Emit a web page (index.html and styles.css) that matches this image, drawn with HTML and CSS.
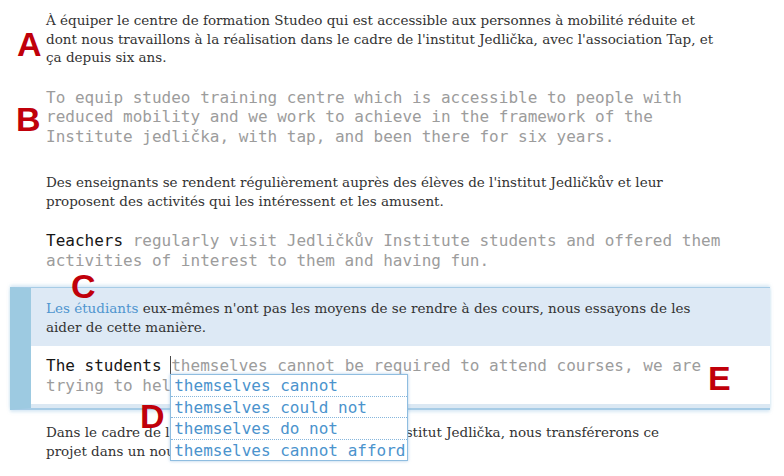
FILE: index.html
```html
<!DOCTYPE html>
<html lang="fr">
<head>
<meta charset="utf-8">
<title>Studeo</title>
<link rel="stylesheet" href="styles.css">
</head>
<body>
<div class="page">
  <div class="seg">
    <p class="src">À équiper le centre de formation Studeo qui est accessible aux personnes à mobilité réduite et<br>dont nous travaillons à la réalisation dans le cadre de l'institut Jedlička, avec l'association Tap, et<br>ça depuis six ans.</p>
    <p class="tgt">To equip studeo training centre which is accessible to people with<br>reduced mobility and we work to achieve in the framework of the<br>Institute jedlička, with tap, and been there for six years.</p>
  </div>
  <div class="seg">
    <p class="src">Des enseignants se rendent régulièrement auprès des élèves de l'institut Jedličkův et leur<br>proposent des activités qui les intéressent et les amusent.</p>
    <p class="tgt"><span class="done">Teachers</span> regularly visit Jedličkův Institute students and offered them<br>activities of interest to them and having fun.</p>
  </div>
  <div class="seg active">
    <div class="src-box">
      <p class="src"><span class="hl">Les étudiants</span> eux-mêmes n'ont pas les moyens de se rendre à des cours, nous essayons de les<br>aider de cette manière.</p>
    </div>
    <div class="tgt-box">
      <p class="tgt"><span class="done">The students </span><span class="caret"><span class="suggest"><span class="opt">themselves cannot</span><span class="opt">themselves could not</span><span class="opt">themselves do not</span><span class="opt">themselves cannot afford</span></span></span>themselves cannot be required to attend courses, we are<br>trying to help them in this way.</p>
    </div>
  </div>
  <div class="seg">
    <p class="src">Dans le cadre de l'agrandissement des locaux de l'institut Jedlička, nous transférerons ce<br>projet dans un nouveau bâtiment.</p>
  </div>

  <span class="mark mark-a">A</span>
  <span class="mark mark-b">B</span>
  <span class="mark mark-c">C</span>
  <span class="mark mark-d">D</span>
  <span class="mark mark-e">E</span>
</div>
</body>
</html>
```

FILE: styles.css
```css
html, body {
  margin: 0;
  padding: 0;
  background: #ffffff;
}

.page {
  position: relative;
  width: 784px;
  height: 476px;
  overflow: hidden;
  padding-top: 1px;
  box-sizing: border-box;
}

p {
  margin: 0;
}

.seg {
  padding: 10px 0 10px 46px;
  margin: 0 14px 7px 0;
}

.src {
  font-family: "DejaVu Serif", serif;
  font-size: 13.5px;
  line-height: 18.5px;
  color: #333333;
  white-space: nowrap;
}

.tgt {
  font-family: "DejaVu Sans Mono", monospace;
  font-size: 16px;
  line-height: 19.5px;
  color: #9c9c9c;
  white-space: nowrap;
}

.src + .tgt {
  margin-top: 21px;
}

.done {
  color: #161616;
}

.hl {
  color: #4f95cf;
}

/* active segment */
.seg.active {
  padding: 0 0 4px 0;
  margin: 0 14px 3px 10px;
  border-left: 21px solid #9dcae1;
  border-top: 1px solid #a7cce6;
  border-bottom: 2px solid #a7cce6;
  box-shadow: 0 -2px 3px rgba(150, 195, 225, 0.35), 0 2px 3px rgba(150, 195, 225, 0.35);
  background: #dbe8f3;
}

.src-box {
  background: #dde9f5;
  padding: 11px 0 10px 15px;
}

.tgt-box {
  background: #ffffff;
  padding: 10px 0 9px 15px;
}

.caret {
  position: relative;
  border-left: 1px solid #4a4a4a;
  margin-left: -1px;
}

.suggest {
  position: absolute;
  left: -1px;
  top: 18px;
  display: block;
  background: #ffffff;
  border: 1px solid #8fbde0;
  box-shadow: 0 0 3px rgba(120, 170, 215, 0.6);
  z-index: 2;
}

.opt {
  display: block;
  font-family: "DejaVu Sans Mono", monospace;
  font-size: 16px;
  line-height: 19.5px;
  color: #4b93cd;
  padding: 1px 2px 0 3px;
  border-bottom: 1px dotted #86b6dc;
}

.opt:last-child {
  border-bottom: none;
}

.mark {
  position: absolute;
  font-family: "Liberation Sans", sans-serif;
  font-weight: bold;
  font-size: 34px;
  line-height: 1;
  color: #c0000a;
  z-index: 3;
}

.mark-a { left: 17px; top: 27px; }
.mark-b { left: 16px; top: 102px; }
.mark-c { left: 71px; top: 269px; }
.mark-d { left: 140px; top: 399px; }
.mark-e { left: 708px; top: 361px; }
```
